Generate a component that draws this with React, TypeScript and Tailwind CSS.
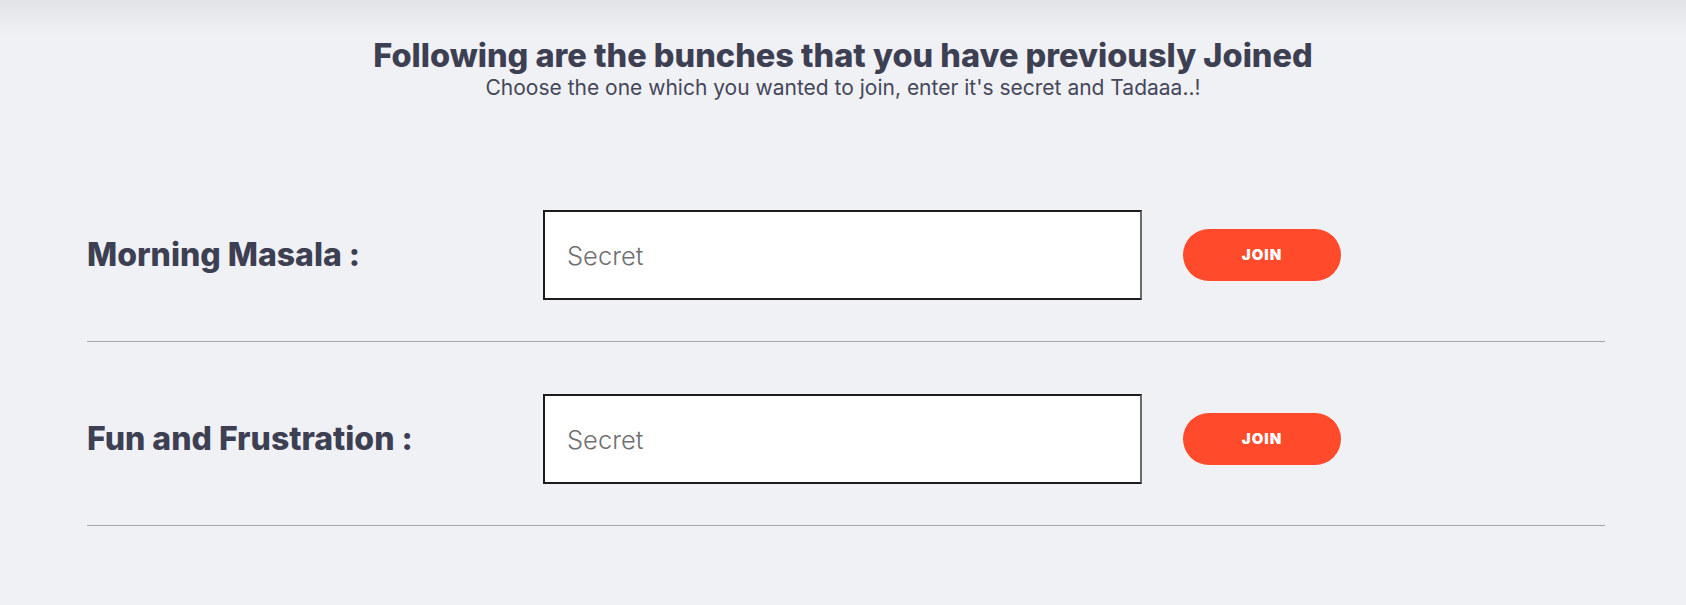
import React from 'react';

const bunches = ['Morning Masala', 'Fun and Frustration'];

const font = { fontFamily: 'Inter, "Open Sans", sans-serif' };

function BunchRow({ name }: { name: string }) {
  return (
    <div className="flex items-center pt-[52px] pb-[41px] border-b border-[#a3a3a8]">
      <div className="w-[456px] shrink-0 text-[32px] font-extrabold text-[#3d4053] leading-none">
        {name} :
      </div>
      <input
        type="password"
        placeholder="Secret"
        className="w-[599px] h-[90px] bg-white border-2 border-[#1c1c1c] border-r-[#6b6b6b] pl-[22px] text-[25.5px] font-light text-[#3d4053] placeholder:text-[#707070] outline-none"
        style={font}
      />
      <button className="ml-[41px] w-[158px] h-[52px] rounded-full bg-[#ff4b2b] text-white text-[15px] font-black tracking-[1px] uppercase">
        Join
      </button>
    </div>
  );
}

export default function App() {
  return (
    <div className="min-h-[605px] bg-[#f0f1f5] relative" style={font}>
      <div className="absolute inset-x-0 top-0 h-[36px] bg-gradient-to-b from-[#e2e3e7] to-transparent pointer-events-none" />
      <div className="relative pt-[37px] text-center text-[#3d4053]">
        <h1 className="text-[32.5px] leading-[37px] font-extrabold">
          Following are the bunches that you have previously Joined
        </h1>
        <p className="mt-[2px] text-[21px] leading-[24px] font-normal text-[#45475a]">
          Choose the one which you wanted to join, enter it's secret and Tadaaa..!
        </p>
      </div>
      <div className="relative mt-[58px] pl-[87px] pr-[81px]">
        {bunches.map((b) => (
          <BunchRow key={b} name={b} />
        ))}
      </div>
    </div>
  );
}
